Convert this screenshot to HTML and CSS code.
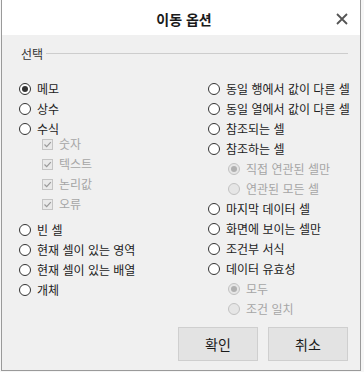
FILE: index.html
```html
<!DOCTYPE html>
<html lang="ko">
<head>
<meta charset="utf-8">
<title>이동 옵션</title>
<link rel="stylesheet" href="styles.css">
</head>
<body>
<div class="dialog">
  <div class="titlebar">
    <span class="title">이동 옵션</span>
    <svg class="close" width="12" height="12" viewBox="0 0 12 12"><path d="M1 1 L11 11 M11 1 L1 11" stroke="#555" stroke-width="1.8" fill="none"/></svg>
  </div>
  <div class="content">
    <div class="legend"><span class="legend-text">선택</span><span class="rule"></span></div>
    <div class="columns">
      <div class="col col-left">
        <div class="row"><span class="radio checked"></span><span class="label">메모</span></div>
        <div class="row"><span class="radio"></span><span class="label">상수</span></div>
        <div class="row"><span class="radio"></span><span class="label">수식</span></div>
        <div class="sublist">
          <div class="row sub"><span class="check"><svg width="9" height="9" viewBox="0 0 9 9"><path d="M1.5 4.5 L3.7 6.7 L7.8 2.2" stroke="#9a9a9a" stroke-width="1.2" fill="none"/></svg></span><span class="label dis">숫자</span></div>
          <div class="row sub"><span class="check"><svg width="9" height="9" viewBox="0 0 9 9"><path d="M1.5 4.5 L3.7 6.7 L7.8 2.2" stroke="#9a9a9a" stroke-width="1.2" fill="none"/></svg></span><span class="label dis">텍스트</span></div>
          <div class="row sub"><span class="check"><svg width="9" height="9" viewBox="0 0 9 9"><path d="M1.5 4.5 L3.7 6.7 L7.8 2.2" stroke="#9a9a9a" stroke-width="1.2" fill="none"/></svg></span><span class="label dis">논리값</span></div>
          <div class="row sub"><span class="check"><svg width="9" height="9" viewBox="0 0 9 9"><path d="M1.5 4.5 L3.7 6.7 L7.8 2.2" stroke="#9a9a9a" stroke-width="1.2" fill="none"/></svg></span><span class="label dis">오류</span></div>
        </div>
        <div class="row"><span class="radio"></span><span class="label">빈 셀</span></div>
        <div class="row"><span class="radio"></span><span class="label">현재 셀이 있는 영역</span></div>
        <div class="row"><span class="radio"></span><span class="label">현재 셀이 있는 배열</span></div>
        <div class="row"><span class="radio"></span><span class="label">개체</span></div>
      </div>
      <div class="col col-right">
        <div class="row"><span class="radio"></span><span class="label">동일 행에서 값이 다른 셀</span></div>
        <div class="row"><span class="radio"></span><span class="label">동일 열에서 값이 다른 셀</span></div>
        <div class="row"><span class="radio"></span><span class="label">참조되는 셀</span></div>
        <div class="row"><span class="radio"></span><span class="label">참조하는 셀</span></div>
        <div class="row subr"><span class="radio disabled checked"></span><span class="label dis">직접 연관된 셀만</span></div>
        <div class="row subr"><span class="radio disabled"></span><span class="label dis">연관된 모든 셀</span></div>
        <div class="row"><span class="radio"></span><span class="label">마지막 데이터 셀</span></div>
        <div class="row"><span class="radio"></span><span class="label">화면에 보이는 셀만</span></div>
        <div class="row"><span class="radio"></span><span class="label">조건부 서식</span></div>
        <div class="row"><span class="radio"></span><span class="label">데이터 유효성</span></div>
        <div class="row subr"><span class="radio disabled checked"></span><span class="label dis">모두</span></div>
        <div class="row subr"><span class="radio disabled"></span><span class="label dis">조건 일치</span></div>
      </div>
    </div>
    <div class="buttons">
      <button class="btn">확인</button>
      <button class="btn">취소</button>
    </div>
  </div>
</div>
</body>
</html>
```

FILE: styles.css
```css
html, body {
  margin: 0;
  padding: 0;
}
body {
  background: #f6f6f6;
  width: 364px;
  height: 372px;
  overflow: hidden;
  font-family: "Noto Sans CJK KR", "Noto Sans", sans-serif;
  color: #222;
}
.dialog {
  margin-left: 1px;
  width: 360px;
  height: 371px;
  box-sizing: border-box;
  border: 1px solid #9a9a9a;
  border-top: none;
  background: #f0f0f0;
  display: flex;
  flex-direction: column;
}
.titlebar {
  height: 35px;
  background: #fff;
  display: flex;
  align-items: center;
  justify-content: center;
  position: relative;
  flex: none;
}
.title {
  font-size: 14px;
  font-weight: 700;
  color: #1a1a1a;
  line-height: 20px;
  margin-left: 6px;
  margin-top: 2px;
}
.close {
  position: absolute;
  right: 12px;
  top: 13px;
}
.content {
  flex: 1;
  display: flex;
  flex-direction: column;
  padding: 0 12px 0 16px;
}
.legend {
  display: flex;
  align-items: center;
  height: 16px;
  margin-top: 11px;
  gap: 3px;
}
.legend-text {
  font-size: 12px;
  line-height: 16px;
  color: #333;
  padding-left: 3px;
}
.rule {
  flex: 1;
  height: 1px;
  background: #cdcdcd;
  margin-top: -2px;
}
.columns {
  display: grid;
  grid-template-columns: 190px 1fr;
  margin-top: 17px;
}
.col {
  display: flex;
  flex-direction: column;
}
.row {
  height: 20px;
  display: flex;
  align-items: center;
  gap: 6px;
}
.label {
  font-size: 12px;
  line-height: 16px;
  white-space: nowrap;
  color: #222;
}
.label.dis {
  color: #a6a6a6;
}
.radio {
  width: 12px;
  height: 12px;
  box-sizing: border-box;
  border: 1px solid #333;
  border-radius: 50%;
  background: #fff;
  display: flex;
  align-items: center;
  justify-content: center;
  flex: none;
}
.radio.checked::after {
  content: "";
  width: 6px;
  height: 6px;
  border-radius: 50%;
  background: #333;
}
.radio.disabled {
  border-color: #c2c2c2;
  background: #e6e6e6;
}
.radio.disabled.checked::after {
  background: #b0b0b0;
}
.col-left {
  padding-left: 1px;
}
.sublist {
  margin-top: -5px;
  margin-bottom: 6px;
}
.row.sub {
  padding-left: 23px;
  gap: 6px;
}
.check {
  width: 11px;
  height: 11px;
  box-sizing: border-box;
  border: 1px solid #c4c4c4;
  background: #e9e9e9;
  display: flex;
  align-items: center;
  justify-content: center;
  flex: none;
}
.row.subr {
  padding-left: 20px;
}
.buttons {
  display: flex;
  justify-content: flex-end;
  gap: 10px;
  margin-top: 8px;
}
.btn {
  width: 80px;
  height: 34px;
  box-sizing: border-box;
  border: 1px solid #cfcfcf;
  background: #e3e3e3;
  font-family: "Noto Sans CJK KR", "Noto Sans", sans-serif;
  font-size: 14px;
  color: #1a1a1a;
  padding: 0;
}
```
